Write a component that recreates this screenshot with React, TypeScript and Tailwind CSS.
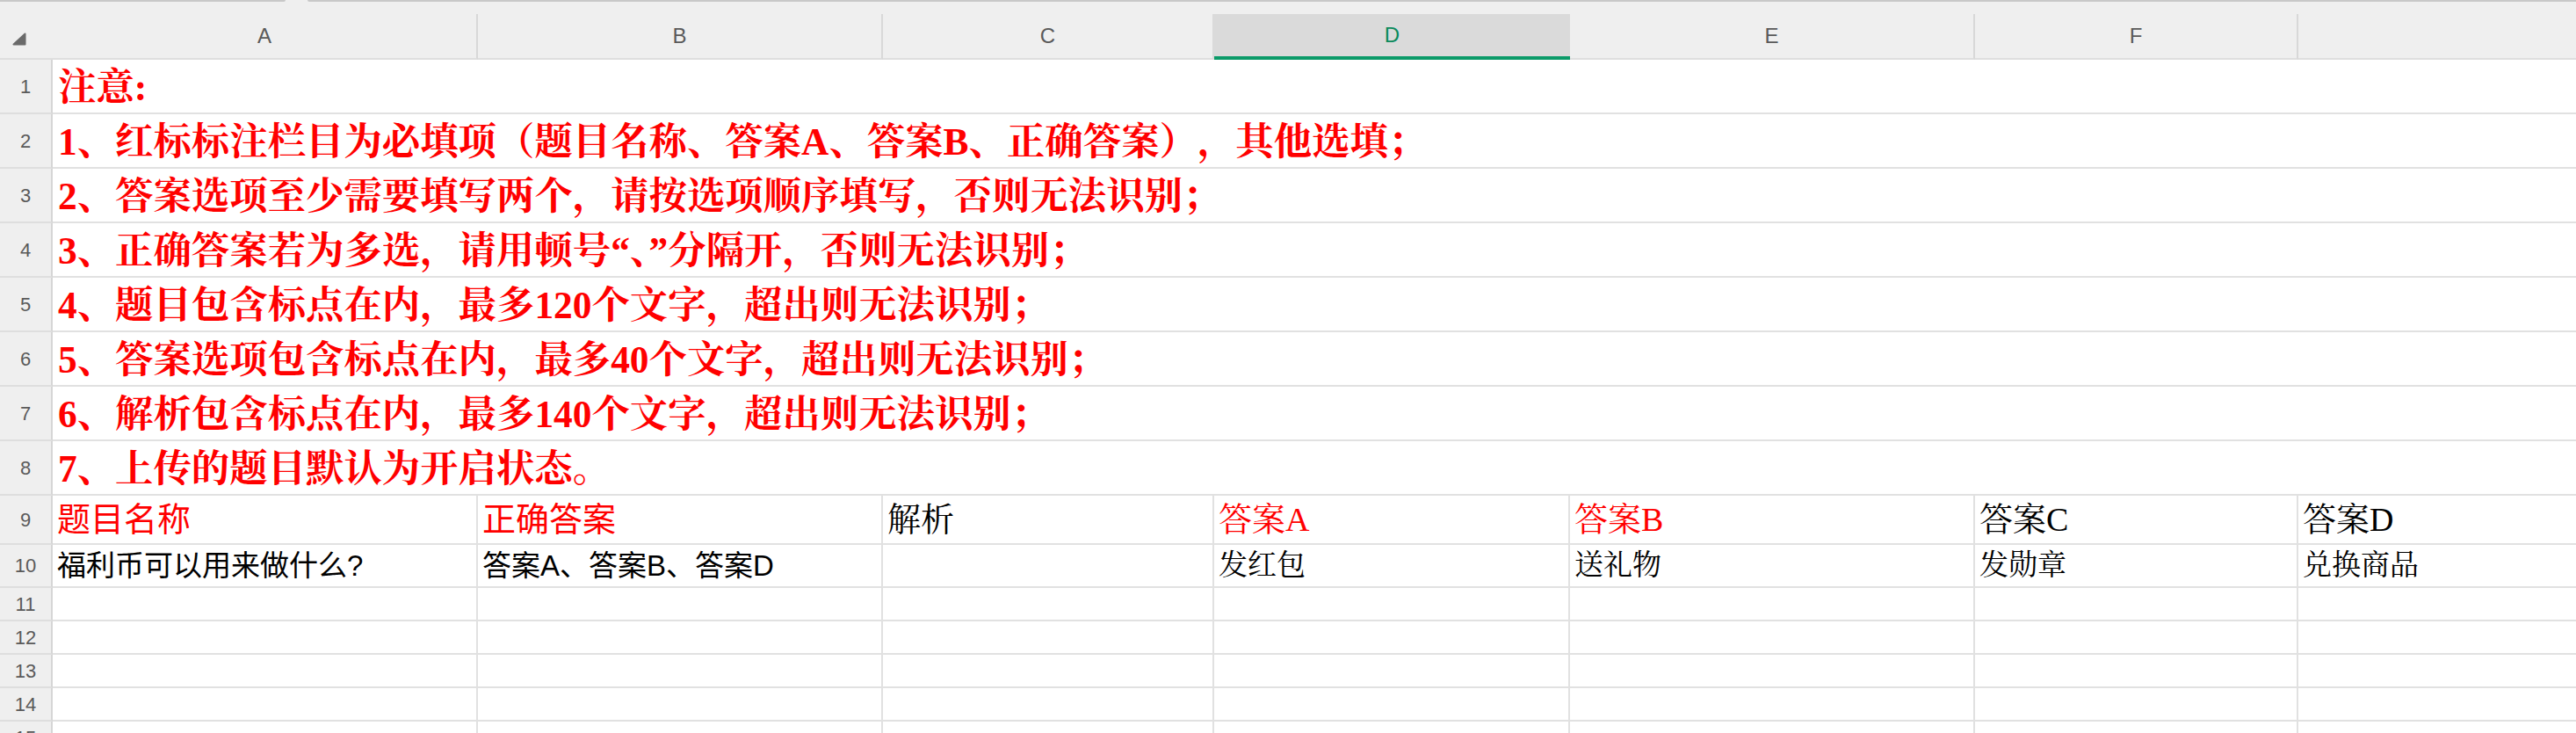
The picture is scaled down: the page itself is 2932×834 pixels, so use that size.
import React from "react";

const serif = "font-['Liberation_Serif','Noto_Serif_CJK_SC','Noto_Sans_CJK_SC',serif]";
const sans = "font-['Liberation_Sans','Noto_Sans_CJK_SC',sans-serif]";

const columns = [
  { key: "A", width: "w-[484px]" },
  { key: "B", width: "w-[461px]" },
  { key: "C", width: "w-[377px]" },
  { key: "D", width: "w-[405px]" },
  { key: "E", width: "w-[461px]" },
  { key: "F", width: "w-[368px]" },
  { key: "G", width: "flex-1" },
];

// the bracket line keeps full-width "），"; the quoted 顿号 stays tight
const notes = [
  { text: "注意:", trim: "" },
  { text: "1、红标标注栏目为必填项（题目名称、答案A、答案B、正确答案），其他选填；", trim: "[text-spacing-trim:space-all]" },
  { text: "2、答案选项至少需要填写两个，请按选项顺序填写，否则无法识别；", trim: "" },
  { text: "3、正确答案若为多选，请用顿号“、”分隔开，否则无法识别；", trim: "" },
  { text: "4、题目包含标点在内，最多120个文字，超出则无法识别；", trim: "" },
  { text: "5、答案选项包含标点在内，最多40个文字，超出则无法识别；", trim: "" },
  { text: "6、解析包含标点在内，最多140个文字，超出则无法识别；", trim: "" },
  { text: "7、上传的题目默认为开启状态。", trim: "" },
];

type Cell = { text: string; red?: boolean; serif?: boolean };

const titleRow: Cell[] = [
  { text: "题目名称", red: true },
  { text: "正确答案", red: true },
  { text: "解析", serif: true },
  { text: "答案A", red: true, serif: true },
  { text: "答案B", red: true, serif: true },
  { text: "答案C", serif: true },
  { text: "答案D", serif: true },
];

const sampleRow: Cell[] = [
  { text: "福利币可以用来做什么?" },
  { text: "答案A、答案B、答案D" },
  { text: "" },
  { text: "发红包", serif: true },
  { text: "送礼物", serif: true },
  { text: "发勋章", serif: true },
  { text: "兑换商品", serif: true },
];

const RowHead = ({ n }: { n: number }) => (
  <div
    className={`w-[60px] shrink-0 h-full flex items-center justify-center bg-[#efefef] border-r-2 border-b-2 border-r-[#d6d6d6] border-b-[#dedede] text-[22px] text-[#5a5a5a] ${sans}`}
  >
    {n}
  </div>
);

const ColumnHeader = () => (
  <div className="flex h-[52px] bg-[#efefef]">
    <div className="w-[60px] shrink-0 border-b-2 border-[#dedede] pl-[14px] pt-[21px]">
      <svg width="16" height="15" viewBox="0 0 16 15">
        <path d="M14.5 1.5 L14.5 13.5 L1.5 13.5 Z" fill="#6a6a6a" stroke="#6a6a6a" strokeWidth="2" strokeLinejoin="round" />
      </svg>
    </div>
    {columns.map((c) => {
      if (c.key === "D") {
        return (
          <div
            key={c.key}
            className={`${c.width} shrink-0 flex items-center justify-center bg-[#dadada] border-b-4 border-[#0b9a68] text-[24px] text-[#0b8a5c] ${sans}`}
          >
            {c.key}
          </div>
        );
      }
      return (
        <div
          key={c.key}
          className={`${c.width} shrink-0 flex items-center justify-center border-b-2 border-b-[#dedede] text-[24px] text-[#5a5a5a] ${sans} ${
            c.key === "G" ? "" : c.key === "C" ? "border-r-2 border-r-[#dadada]" : "border-r-2 border-r-[#d8d8d8]"
          }`}
        >
          {c.key === "G" ? "" : c.key}
        </div>
      );
    })}
  </div>
);

const DataRow = ({ n, cells, height, size }: { n: number; cells: Cell[]; height: string; size: string }) => (
  <div className={`flex ${height}`}>
    <RowHead n={n} />
    {columns.map((c, i) => {
      const cell = cells[i];
      return (
        <div
          key={c.key}
          className={`${c.width} shrink-0 h-full flex items-center pl-[5px] border-b-2 border-b-[#e1e1e1] whitespace-nowrap overflow-hidden ${size} ${
            i < columns.length - 1 ? "border-r-2 border-r-[#e1e1e1]" : ""
          } ${cell?.serif ? serif : sans} ${cell?.red ? "text-[#ff0000]" : "text-black"}`}
        >
          {cell?.text}
        </div>
      );
    })}
  </div>
);

export default function App() {
  return (
    <div className="w-[2932px] h-[834px] overflow-hidden bg-white">
      {/* toolbar edges above the sheet */}
      <div className="h-[16px] bg-[#efefef] flex gap-[25px]">
        <div className="w-[325px] h-[2px] bg-[#c8c8c8] rounded-br-full" />
        <div className="flex-1 h-[2px] bg-[#c8c8c8] rounded-bl-full" />
      </div>

      <ColumnHeader />

      {notes.map((line, i) => (
        <div key={i} className="flex h-[62px]">
          <RowHead n={i + 1} />
          <div
            className={`flex-1 h-full flex items-center pl-[6px] pt-[3px] border-b-2 border-[#e1e1e1] whitespace-nowrap text-[43.4px] font-bold text-[#ff0000] ${serif} ${line.trim}`}
          >
            {line.text}
          </div>
        </div>
      ))}

      <DataRow n={9} cells={titleRow} height="h-[56px]" size="text-[38px]" />
      <DataRow n={10} cells={sampleRow} height="h-[49px]" size="text-[33px]" />
      {[11, 12, 13, 14, 15].map((n) => (
        <DataRow key={n} n={n} cells={[]} height="h-[38px]" size="text-[33px]" />
      ))}
    </div>
  );
}
